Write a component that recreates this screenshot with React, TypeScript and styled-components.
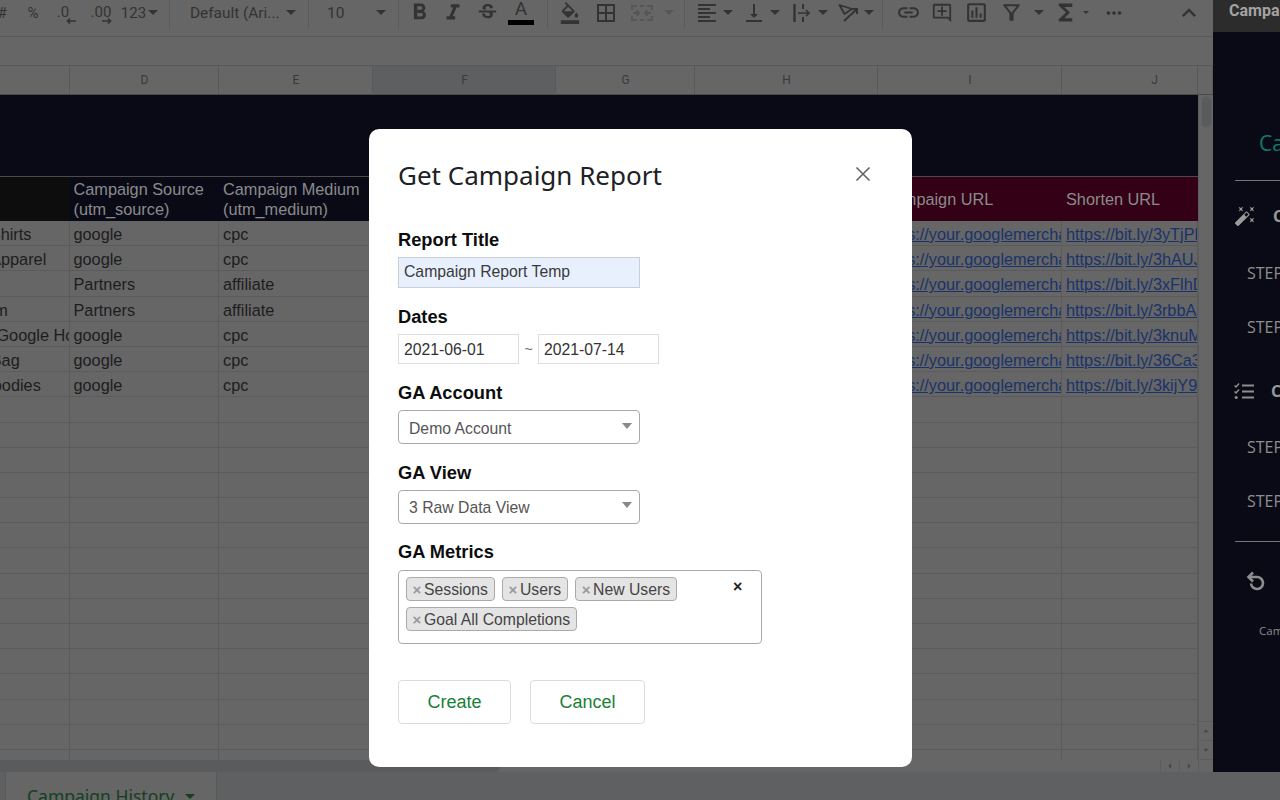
import React from 'react';
import styled, { createGlobalStyle } from 'styled-components';
import {
  MdFormatBold, MdFormatItalic, MdStrikethroughS, MdFormatColorFill, MdBorderAll, MdFormatAlignLeft,
  MdVerticalAlignBottom, MdLink, MdOutlineAddComment, MdOutlineInsertChart, MdFunctions, MdMoreHoriz,
  MdExpandLess, MdAutoFixHigh, MdArrowDropDown, MdArrowDropUp, MdArrowLeft, MdArrowRight,
  MdOutlineFilterAlt,
} from 'react-icons/md';

const Global = createGlobalStyle`
  html, body { margin: 0; padding: 0; width: 1280px; height: 800px; overflow: hidden; background: #666; }
  * { box-sizing: border-box; }
`;

const Page = styled.div`
  width: 1280px; height: 800px; display: grid; grid-template-rows: 772px 28px; grid-template-columns: 1213px 67px;
  overflow: hidden; font-family: "Liberation Sans", Arial, sans-serif; position: relative;
`;
const Sheet = styled.div`display: flex; flex-direction: column; min-width: 0; background: #666;`;
const Toolbar = styled.div`
  height: 37px; flex: none; display: flex; align-items: center; padding-bottom: 11px; border-bottom: 1px solid #595959;
  font-family: Roboto, sans-serif; color: #333; font-size: 15px; overflow: hidden; margin-left: -8px;
`;
const Tool = styled.div<{ $w: number; $ml?: number; $dim?: boolean; $fs?: number }>`
  flex: none; width: ${p => p.$w}px; margin-left: ${p => p.$ml ?? 0}px; height: 26px;
  display: flex; align-items: center; justify-content: center; position: relative;
  color: ${p => (p.$dim ? '#565656' : '#333')}; font-size: ${p => p.$fs ?? 15}px;
  svg { flex: none; }
`;
const Sep = styled.div<{ $ml?: number }>`
  flex: none; width: 1px; height: 32px; background: #5a5a5a; margin-left: ${p => p.$ml ?? 0}px;
`;
const Caret = styled.span<{ $ml?: number; $dim?: boolean; $s?: number }>`
  flex: none; width: 0; height: 0; margin-left: ${p => p.$ml ?? 0}px;
  border-left: ${p => p.$s ?? 5}px solid transparent; border-right: ${p => p.$s ?? 5}px solid transparent;
  border-top: ${p => p.$s ?? 5}px solid ${p => (p.$dim ? '#565656' : '#333')};
`;
const Decimal = styled.span`font-size: 15px; position: relative; top: -1px;`;
const DecArrow = styled.svg<{ $r: number }>`position: absolute; bottom: 2px; right: ${p => p.$r}px;`;
const Picker = styled.div<{ $w: number; $pl: number; $fs: number }>`
  flex: none; width: ${p => p.$w}px; padding-left: ${p => p.$pl}px; padding-right: 12px; height: 26px;
  display: flex; align-items: center; justify-content: space-between; font-size: ${p => p.$fs}px; color: #333;
`;
const ColorA = styled.div`
  display: flex; flex-direction: column; align-items: center; font-size: 19px; line-height: 20px; color: #333; position: relative; top: -1px;
  &::after { content: ''; width: 26px; height: 5px; background: #000; margin-top: 1px; }
`;
const FormulaBar = styled.div`height: 29px; flex: none; border-bottom: 1px solid #595959;`;
const Cols = styled.div`
  display: grid; grid-template-columns: 70px 149px 154px 183px 139px 183px 184px 136px 15px; height: 29px; flex: none;
`;
const ColHead = styled.div<{ $sel?: boolean; $pl?: number }>`
  display: flex; align-items: center; justify-content: center; font-family: Roboto, sans-serif; font-size: 12px; color: #3a3a3a;
  padding-left: ${p => p.$pl ?? 1}px;
  border-right: 1px solid #595959; border-bottom: 1px solid #4a4a4a; background: ${p => (p.$sel ? '#5e5f61' : '#666')};
`;
const Body = styled.div`flex: 1; display: grid; grid-template-columns: 1198px 15px; grid-template-rows: 665px 12px; min-height: 0;`;
const GridWrap = styled.div`overflow: hidden; display: flex; flex-direction: column;`;
const Banner = styled.div`height: 82px; flex: none; background: #0a0a17; border-bottom: 1px solid #4b4b4b;`;
const Table = styled.div`
  display: grid; grid-template-columns: 69.5px 149.5px 154px 183px 139px 183px 184px 136px; grid-template-rows: 44px; grid-auto-rows: 25.2px;
  font-size: 16.3px; color: #1d1d1d;
`;
const Head = styled.div<{ $bg: string }>`
  background: ${p => p.$bg}; color: #8b8b8b; display: flex; align-items: center; line-height: 20px; padding: 0 4px; overflow: hidden; white-space: pre-line;
`;
const Cell = styled.div`
  border-right: 1px solid #5b5b5b; border-bottom: 1px solid #5b5b5b; padding: 0 4px; line-height: 26px; white-space: nowrap; overflow: hidden; background: #666;
`;
const ClippedCell = styled(Cell)`
  padding: 0; display: flex; justify-content: flex-start;
  span { margin-left: -81.4px; }
`;
const Link = styled.span<{ $ml?: number }>`color: #19336a; text-decoration: underline; margin-left: ${p => p.$ml ?? 0}px;`;
const VScroll = styled.div`
  grid-row: 1; grid-column: 2; display: flex; flex-direction: column; align-items: center; border-left: 1px solid #5d5d5d; padding-top: 1px;
`;
const VThumb = styled.div`width: 11px; height: 32px; background: #5a5b5c; border-radius: 5px; border: 1px solid #626262;`;
const VArrows = styled.div`
  margin-top: auto; width: 100%; display: flex; flex-direction: column; border-top: 1px solid #5d5d5d; margin-bottom: 0;
`;
const VArrow = styled.div`
  height: 19px; display: flex; align-items: center; justify-content: center; color: #4a4a4a; border-bottom: 1px solid #5d5d5d;
`;
const HScroll = styled.div`grid-row: 2; grid-column: 1 / 3; display: flex; align-items: stretch;`;
const HThumb = styled.div`width: 500px; background: #5a5b5c; border-radius: 0 5px 5px 0;`;
const HNav = styled.div`
  margin-left: auto; margin-right: 14px; display: flex; color: #4a4a4a; border-left: 1px solid #5d5d5d;
  & > div { width: 19px; display: flex; align-items: center; justify-content: center; border-right: 1px solid #5d5d5d; }
`;
const Side = styled.aside`
  background: #0a0a17; overflow: hidden; display: flex; flex-direction: column; font-family: "Open Sans", sans-serif; color: #8e8e8e; white-space: nowrap; min-width: 0;
`;
const SideTop = styled.div`
  height: 32px; flex: none; background: #2c2c2c; color: #a3a3a3; font-family: Roboto, sans-serif; font-weight: 700; font-size: 16px;
  padding: 1px 0 0 16px; line-height: 20px;
`;
const SideTitle = styled.div`
  margin-top: 96px; height: 30px; padding-left: 46px; font-size: 21px; line-height: 30px; color: #12796f;
`;
const SideRule = styled.div<{ $mt: number }>`height: 1px; background: #757575; margin: ${p => p.$mt}px 0 0 22px; flex: none;`;
const SideSection = styled.div<{ $mt: number }>`
  margin-top: ${p => p.$mt}px; height: 24px; display: flex; align-items: center; padding-left: 21px; color: #9a9a9a; font-weight: 700; font-size: 16px;
  svg { flex: none; margin-right: 17px; }
`;
const Step = styled.div<{ $mt: number }>`
  margin-top: ${p => p.$mt}px; height: 24px; line-height: 24px; padding-left: 34px; font-size: 16px; color: #8e8e8e;
`;
const SideUndo = styled.div`margin-top: 27px; padding-left: 33px; height: 24px; color: #8e8e8e; display: flex; align-items: center;`;
const SideCaption = styled.div`margin-top: 30px; padding-left: 46px; font-size: 11.5px; line-height: 16px; color: #8a8a8a;`;
const Footer = styled.div`
  grid-column: 1 / 3; background: #5f6061; display: flex; overflow: hidden; padding-left: 5px;
`;
const Tab = styled.div`
  width: 212px; height: 40px; background: #666; border-left: 1px solid #595959; border-right: 1px solid #595959;
  color: #143f22; font-family: "Noto Sans", sans-serif; font-size: 17.5px; padding: 13px 0 0 21px; display: flex; align-items: flex-start; line-height: 22px;
`;
const TabCaret = styled.span`
  width: 0; height: 0; margin: 9px 0 0 11px; border-left: 5px solid transparent; border-right: 5px solid transparent; border-top: 5px solid #143f22;
`;

const Modal = styled.div`
  position: absolute; left: 369px; top: 129px; width: 543px; height: 638px; background: #fff; border-radius: 10px; padding: 29px 29px 0;
  display: flex; flex-direction: column; align-items: flex-start;
`;
const ModalHead = styled.div`width: 100%; display: flex; align-items: center; justify-content: space-between; height: 34px; margin-bottom: 41px;`;
const Title = styled.h1`
  margin: 0; font-family: "Noto Sans", sans-serif; font-weight: 400; font-size: 26px; line-height: 34px; color: #202124;
`;
const Close = styled.svg`margin-right: 12px; margin-top: -2px; flex: none;`;
const Label = styled.div`font-size: 18.3px; font-weight: 700; color: #0d0d0d; line-height: 20px; height: 20px; margin-top: -3px;`;
const TitleInput = styled.div`
  width: 242px; height: 31px; margin: 7px 0 22px; background: #e8f0fe; border: 1px solid #c9cfd8; padding: 0 5px; font-size: 15.75px; line-height: 28px; color: #3a3a3a;
`;
const DateRow = styled.div`display: flex; align-items: center; margin: 7px 0 22px;`;
const DateInput = styled.div`
  width: 121px; height: 30px; border: 1px solid #ddd; padding: 0 5px; font-size: 15.75px; line-height: 29px; color: #333;
`;
const Tilde = styled.span`width: 19px; text-align: center; font-size: 14px; color: #666;`;
const Select = styled.div`
  width: 242px; height: 34px; margin: 7px 0 21.5px; border: 1px solid #aaa; border-radius: 4px; padding: 3px 7px 0 10px;
  display: flex; align-items: center; justify-content: space-between; font-size: 15.75px; color: #555;
`;
const SelectCaret = styled.span`
  width: 0; height: 0; border-left: 5px solid transparent; border-right: 5px solid transparent; border-top: 6px solid #888; margin-top: -6px;
`;
const Multi = styled.div`
  width: 364px; height: 74px; margin-top: 8px; border: 1px solid #aaa; border-radius: 4px; padding: 6px 7px; display: flex; flex-wrap: wrap; gap: 6px 7px; align-content: flex-start; position: relative;
`;
const Chip = styled.div`
  height: 24px; background: #e4e4e4; border: 1px solid #aaa; border-radius: 4px; padding: 1px 6px 0 5px; display: flex; align-items: center; font-size: 15.75px; color: #444; line-height: 22px;
`;
const ChipX = styled.span`color: #999; font-weight: 700; font-size: 15px; margin-right: 2px; width: 10px; text-align: center;`;
const ClearX = styled.span`position: absolute; left: 334px; top: 6px; font-size: 16px; font-weight: 700; color: #222; line-height: 20px;`;
const Buttons = styled.div`display: flex; gap: 19px; margin-top: 36px;`;
const Btn = styled.div<{ $w: number }>`
  width: ${p => p.$w}px; height: 44px; border: 1px solid #dadce0; border-radius: 4px; display: flex; align-items: center; justify-content: center;
  color: #188038; font-size: 18px;
`;

const rows: [string, string, string, string][] = [
  ['Google T-Shirts', 'google', 'cpc', '3yTjPhk'],
  ['Seasonal Apparel', 'google', 'cpc', '3hAUJqa'],
  ['Affiliate', 'Partners', 'affiliate', '3xFlhDk'],
  ['Affiliate Item', 'Partners', 'affiliate', '3rbbAcw'],
  ['Best Buys Google Hoodies', 'google', 'cpc', '3knuMtp'],
  ['Blue Tote Bag', 'google', 'cpc', '36Ca3xy'],
  ['Comfort Hoodies', 'google', 'cpc', '3kijY9a'],
];

const MergeIcon = () => (
  <svg width="22" height="18" viewBox="0 0 22 18" fill="none" stroke="#565656" strokeWidth="2">
    <path d="M1 6V2h5M9 2h4M16 2h5v4M1 12v4h5M9 16h4M16 16h5v-4" />
    <path d="M2 9h6M5.5 6.5 8 9l-2.5 2.5M20 9h-6M16.5 6.5 14 9l2.5 2.5" />
  </svg>
);
const WrapIcon = () => (
  <svg width="18" height="18" viewBox="0 0 18 18" fill="none" stroke="#333" strokeWidth="2">
    <path d="M1.5 0v18" strokeWidth="2.4" />
    <path d="M10 0v5M10 13v5" />
    <path d="M5 9h11M13 6l3 3-3 3" strokeWidth="1.7" />
  </svg>
);
const RotateIcon = () => (
  <svg width="20" height="18" viewBox="0 0 20 18" fill="none" stroke="#333" strokeWidth="1.8">
    <path d="M1.5 1 14 5 6.5 10Z" strokeLinejoin="round" />
    <path d="M6 17 18.5 5.5M14 5h5v5" strokeWidth="2" />
  </svg>
);
const ChecklistIcon = () => (
  <svg width="20" height="17" viewBox="0 0 20 17" fill="none" stroke="#8e8e8e" strokeWidth="2">
    <path d="M8 2.5h12M8 8.5h12M8 14.5h12" />
    <path d="M.5 2.5 2 4l3-3.5M.5 8.5 2 10l3-3.5" strokeWidth="1.5" />
    <circle cx="2.2" cy="14.5" r="1.6" fill="#8e8e8e" stroke="none" />
  </svg>
);
const UndoIcon = () => (
  <svg width="20" height="20" viewBox="0 0 20 20" fill="none" stroke="#8e8e8e" strokeWidth="2.6">
    <path d="M7 1.5 2.5 6 7 10.5" />
    <path d="M3 6h8a6 6 0 1 1-6 6.5" />
  </svg>
);
const ArrowL = () => (
  <DecArrow $r={-4} width="10" height="6" viewBox="0 0 10 6" fill="none" stroke="#333" strokeWidth="1.6"><path d="M10 3H1.5M4 .5 1.5 3 4 5.5" /></DecArrow>
);
const ArrowR = () => (
  <DecArrow $r={9} width="10" height="6" viewBox="0 0 10 6" fill="none" stroke="#333" strokeWidth="1.6"><path d="M0 3h8.5M6 .5 8.5 3 6 5.5" /></DecArrow>
);

export default function App() {
  const blanks = Array.from({ length: 15 });
  return (
    <Page>
      <Global />
      <Sheet>
        <Toolbar>
          <Tool $w={20}>#</Tool>
          <Tool $w={42}>%</Tool>
          <Tool $w={18}><Decimal>.0</Decimal><ArrowL /></Tool>
          <Tool $w={40} $ml={9}><Decimal>.00</Decimal><ArrowR /></Tool>
          <Tool $w={37}>123<Caret $ml={2} /></Tool>
          <Sep $ml={11} />
          <Picker $w={138} $pl={20} $fs={15.4}>Default (Ari...<Caret /></Picker>
          <Sep />
          <Picker $w={89} $pl={18} $fs={15.5}>10<Caret /></Picker>
          <Sep />
          <Tool $w={34} $ml={3}><MdFormatBold size={27} /></Tool>
          <Tool $w={34}><MdFormatItalic size={26} /></Tool>
          <Tool $w={34}><MdStrikethroughS size={23} /></Tool>
          <Tool $w={34}><ColorA>A</ColorA></Tool>
          <Sep $ml={9} />
          <Tool $w={34} $ml={5}><MdFormatColorFill size={22} /></Tool>
          <Tool $w={36} $ml={1}><MdBorderAll size={24} /></Tool>
          <Tool $w={36} $dim><MergeIcon /></Tool>
          <Tool $w={14} $ml={2} $dim><Caret $dim /></Tool>
          <Sep $ml={8} />
          <Tool $w={28} $ml={8}><MdFormatAlignLeft size={24} /></Tool>
          <Tool $w={13}><Caret /></Tool>
          <Tool $w={28} $ml={6}><MdVerticalAlignBottom size={24} /></Tool>
          <Tool $w={14}><Caret /></Tool>
          <Tool $w={28} $ml={6}><WrapIcon /></Tool>
          <Tool $w={14}><Caret /></Tool>
          <Tool $w={24} $ml={6}><RotateIcon /></Tool>
          <Tool $w={14} $ml={2}><Caret /></Tool>
          <Sep $ml={6} />
          <Tool $w={34} $ml={8}><MdLink size={25} /></Tool>
          <Tool $w={34}><MdOutlineAddComment size={22} /></Tool>
          <Tool $w={34}><MdOutlineInsertChart size={25} /></Tool>
          <Tool $w={34} $ml={1}><MdOutlineFilterAlt size={25} /></Tool>
          <Tool $w={14} $ml={4}><Caret /></Tool>
          <Tool $w={26} $ml={6}><MdFunctions size={27} /></Tool>
          <Tool $w={12} $ml={2}><Caret $s={3} /></Tool>
          <Tool $w={32} $ml={6}><MdMoreHoriz size={22} /></Tool>
          <Tool $w={32} $ml={43}><MdExpandLess size={28} /></Tool>
        </Toolbar>
        <FormulaBar />
        <Cols>
          <ColHead />
          <ColHead>D</ColHead>
          <ColHead>E</ColHead>
          <ColHead $sel>F</ColHead>
          <ColHead>G</ColHead>
          <ColHead>H</ColHead>
          <ColHead>I</ColHead>
          <ColHead $pl={50}>J</ColHead>
          <ColHead />
        </Cols>
        <Body>
          <GridWrap>
            <Banner />
            <Table>
              <Head $bg="#0d0d0d" />
              <Head $bg="#0a0a17">{'Campaign Source\n(utm_source)'}</Head>
              <Head $bg="#0a0a17">{'Campaign Medium\n(utm_medium)'}</Head>
              <Head $bg="#0a0a17" />
              <Head $bg="#0a0a17" />
              <Head $bg="#0a0a17" />
              <Head $bg="#330016">Campaign URL</Head>
              <Head $bg="#330016">Shorten URL</Head>
              {rows.map(r => (
                <React.Fragment key={r[3]}>
                  <ClippedCell><span>{r[0]}</span></ClippedCell>
                  <Cell>{r[1]}</Cell>
                  <Cell>{r[2]}</Cell>
                  <Cell />
                  <Cell />
                  <Cell />
                  <Cell><Link $ml={-2}>https://your.googlemerchandisestore.com</Link></Cell>
                  <Cell><Link>https://bit.ly/{r[3]}</Link></Cell>
                </React.Fragment>
              ))}
              {blanks.flatMap((_, i) =>
                Array.from({ length: 8 }).map((__, j) => <Cell key={`${i}-${j}`} />)
              )}
            </Table>
          </GridWrap>
          <VScroll>
            <VThumb />
            <VArrows>
              <VArrow><MdArrowDropUp size={16} /></VArrow>
              <VArrow><MdArrowDropDown size={16} /></VArrow>
            </VArrows>
          </VScroll>
          <HScroll>
            <HThumb />
            <HNav>
              <div><MdArrowLeft size={14} /></div>
              <div><MdArrowRight size={14} /></div>
            </HNav>
          </HScroll>
        </Body>
      </Sheet>
      <Side>
        <SideTop>Campaign</SideTop>
        <SideTitle>Campaign</SideTitle>
        <SideRule $mt={22} />
        <SideSection $mt={23}><MdAutoFixHigh size={22} />Create</SideSection>
        <Step $mt={33}>STEP 1</Step>
        <Step $mt={30}>STEP 2</Step>
        <SideSection $mt={40}><ChecklistIcon />Check</SideSection>
        <Step $mt={32}>STEP 1</Step>
        <Step $mt={30}>STEP 2</Step>
        <SideRule $mt={28} />
        <SideUndo><UndoIcon /></SideUndo>
        <SideCaption>Campaign</SideCaption>
      </Side>
      <Footer>
        <Tab>Campaign History<TabCaret /></Tab>
      </Footer>
      <Modal>
        <ModalHead>
          <Title>Get Campaign Report</Title>
          <Close width="16" height="16" viewBox="0 0 16 16" fill="none" stroke="#5f6368" strokeWidth="1.6">
            <path d="M1.5 1.5l13 13M14.5 1.5l-13 13" />
          </Close>
        </ModalHead>
        <Label>Report Title</Label>
        <TitleInput>Campaign Report Temp</TitleInput>
        <Label>Dates</Label>
        <DateRow>
          <DateInput>2021-06-01</DateInput>
          <Tilde>~</Tilde>
          <DateInput>2021-07-14</DateInput>
        </DateRow>
        <Label>GA Account</Label>
        <Select>Demo Account<SelectCaret /></Select>
        <Label>GA View</Label>
        <Select>3 Raw Data View<SelectCaret /></Select>
        <Label>GA Metrics</Label>
        <Multi>
          <Chip><ChipX>×</ChipX>Sessions</Chip>
          <Chip><ChipX>×</ChipX>Users</Chip>
          <Chip><ChipX>×</ChipX>New Users</Chip>
          <Chip><ChipX>×</ChipX>Goal All Completions</Chip>
          <ClearX>×</ClearX>
        </Multi>
        <Buttons>
          <Btn $w={113}>Create</Btn>
          <Btn $w={115}>Cancel</Btn>
        </Buttons>
      </Modal>
    </Page>
  );
}
